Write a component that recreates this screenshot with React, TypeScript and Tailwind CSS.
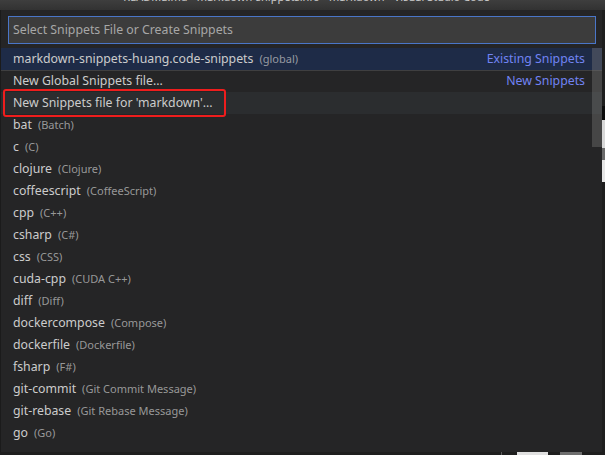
const langs: [string, string][] = [
  ["bat", "Batch"],
  ["c", "C"],
  ["clojure", "Clojure"],
  ["coffeescript", "CoffeeScript"],
  ["cpp", "C++"],
  ["csharp", "C#"],
  ["css", "CSS"],
  ["cuda-cpp", "CUDA C++"],
  ["diff", "Diff"],
  ["dockercompose", "Compose"],
  ["dockerfile", "Dockerfile"],
  ["fsharp", "F#"],
  ["git-commit", "Git Commit Message"],
  ["git-rebase", "Git Rebase Message"],
  ["go", "Go"],
];

export default function App() {
  return (
    <div
      className="relative h-[455px] w-[605px] overflow-hidden bg-[#1e1e1e] text-[12.3px] text-[#cccccc]"
      style={{ fontFamily: '"Noto Sans", "Open Sans", sans-serif' }}
    >
      {/* Title bar, mostly cut off */}
      <div className="h-[10px] overflow-hidden bg-gradient-to-b from-[#3e3e3e] to-[#323232] pl-[8px] text-center">
        <div className="-mt-[9px] text-[11px] leading-[11px] text-[#cccccc]">
          README.md - markdown-snippetsinfo - markdown - Visual Studio Code
        </div>
      </div>

      <div className="flex">
        {/* Quick pick */}
        <div className="relative h-[442px] w-[602px] border-l border-[#1b1b1b] bg-[#252526] pt-[6px]">
          <div className="mx-[7px] mr-[6px] flex h-[28px] items-center border border-[#4a76c8] bg-[#3c3c3c] px-[4px] text-[#a7a7a7]">
            Select Snippets File or Create Snippets
          </div>

          <div className="mt-[4px]">
            <div className="flex h-[22px] items-center justify-between bg-[#1e2b47] pl-[12px] pr-[17px]">
              <span>
                markdown-snippets-huang.code-snippets
                <span className="ml-[6px] text-[11px] text-[#cccccc]/70">(global)</span>
              </span>
              <span className="text-[#7183f3]">Existing Snippets</span>
            </div>
            <div className="flex h-[22px] items-center justify-between border-t border-[#3f3f40] pl-[12px] pr-[17px]">
              <span>New Global Snippets file...</span>
              <span className="text-[#7183f3]">New Snippets</span>
            </div>
            <div className="flex h-[22px] items-center bg-[#2b2d2f] pl-[12px]">
              New Snippets file for 'markdown'...
            </div>
            {langs.map(([id, name]) => (
              <div key={id} className="flex h-[22px] items-center pl-[12px]">
                {id}
                <span className="ml-[6px] text-[11px] text-[#cccccc]/70">({name})</span>
              </div>
            ))}
          </div>

          {/* scrollbar */}
          <div className="absolute left-[591px] top-[38px] h-[99px] w-[10px] bg-[#797979]/40" />

          {/* red highlight */}
          <div className="absolute left-[2px] top-[79px] h-[28px] w-[223px] rounded-[3px] border-2 border-[#ee1d1d]" />
        </div>

        {/* editor edge */}
        <div className="flex flex-1 flex-col">
          <div className="h-[96px]" />
          <div className="h-[14px] bg-[#0c0c0c]" />
          <div className="h-[28px] bg-[#d8d8d8]" />
          <div className="h-[12px] bg-[#6a6a6a]" />
          <div className="h-[22px] bg-[#e6e6e6]" />
        </div>
      </div>

      {/* editor below */}
      <div className="relative h-[3px]">
        <div className="absolute left-[501px] top-0 h-[3px] w-px bg-[#5a5a5a]" />
        <div className="absolute left-[517px] top-0 h-[3px] w-[31px] bg-[#e0e0e0]" />
        <div className="absolute left-[560px] top-0 h-[3px] w-[22px] bg-[#6e6e6e]" />
      </div>
    </div>
  );
}
